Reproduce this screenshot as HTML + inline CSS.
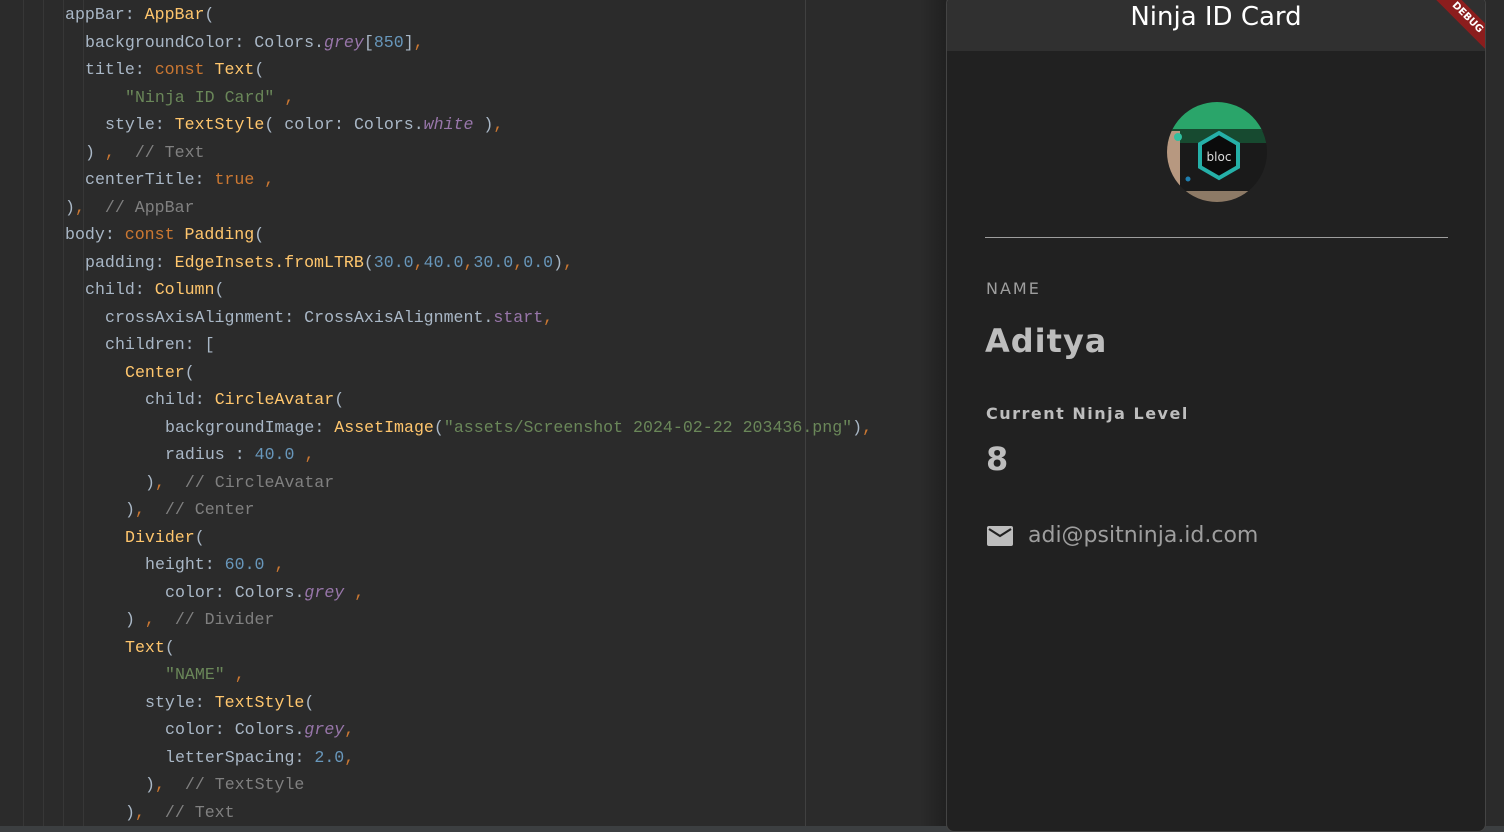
<!DOCTYPE html>
<html><head><meta charset="utf-8"><style>
html,body{margin:0;padding:0;width:1504px;height:832px;overflow:hidden;background:#2b2b2b;position:relative}
.code{position:absolute;left:0;top:1px;font-family:"Liberation Mono",monospace;font-size:16.6px;color:#a9b7c6;white-space:pre}
.l{position:absolute;height:27.5px;line-height:27.5px}
.k{color:#cc7832}.y{color:#ffc66d}.s{color:#6a8759}.n{color:#6897bb}.p{color:#9876aa;font-style:italic}.c{color:#808080}
.g{position:absolute;top:0;width:1px;height:826px;background:#373737}
.app{position:absolute;left:946px;top:-4px;width:538px;height:834px;background:#212121;border:1px solid #444;border-radius:8px;overflow:hidden;font-family:"DejaVu Sans","Liberation Sans",sans-serif}
.bar{position:absolute;left:0;top:0;width:100%;height:54px;background:#303030}
</style></head><body>
<div class="g" style="left:23px"></div><div class="g" style="left:43px"></div><div class="g" style="left:63px"></div><div class="g" style="left:83px"></div>
<div style="position:absolute;left:805px;top:0;width:1px;height:826px;background:#404040"></div>
<div style="position:absolute;left:920px;top:0;width:26px;height:826px;background:linear-gradient(90deg,rgba(0,0,0,0),rgba(0,0,0,.25))"></div>
<div style="position:absolute;left:0;top:826px;width:1504px;height:6px;background:#3c3f41"></div>
<div class="code">
<div class="l" style="top:0;left:65px">appBar: <span class="y">AppBar</span>(</div>
<div class="l" style="top:27.5px;left:85px">backgroundColor: Colors.<span class="p">grey</span>[<span class="n">850</span>]<span class="k">,</span></div>
<div class="l" style="top:55px;left:85px">title: <span class="k">const</span> <span class="y">Text</span>(</div>
<div class="l" style="top:82.5px;left:125px"><span class="s">"Ninja ID Card"</span> <span class="k">,</span></div>
<div class="l" style="top:110px;left:105px">style: <span class="y">TextStyle</span>( color: Colors.<span class="p">white</span> )<span class="k">,</span></div>
<div class="l" style="top:137.5px;left:85px">) <span class="k">,</span>  <span class="c">// Text</span></div>
<div class="l" style="top:165px;left:85px">centerTitle: <span class="k">true ,</span></div>
<div class="l" style="top:192.5px;left:65px">)<span class="k">,</span>  <span class="c">// AppBar</span></div>
<div class="l" style="top:220px;left:65px">body: <span class="k">const</span> <span class="y">Padding</span>(</div>
<div class="l" style="top:247.5px;left:85px">padding: <span class="y">EdgeInsets.fromLTRB</span>(<span class="n">30.0</span><span class="k">,</span><span class="n">40.0</span><span class="k">,</span><span class="n">30.0</span><span class="k">,</span><span class="n">0.0</span>)<span class="k">,</span></div>
<div class="l" style="top:275px;left:85px">child: <span class="y">Column</span>(</div>
<div class="l" style="top:302.5px;left:105px">crossAxisAlignment: CrossAxisAlignment.<span class="p" style="font-style:normal">start</span><span class="k">,</span></div>
<div class="l" style="top:330px;left:105px">children: [</div>
<div class="l" style="top:357.5px;left:125px"><span class="y">Center</span>(</div>
<div class="l" style="top:385px;left:145px">child: <span class="y">CircleAvatar</span>(</div>
<div class="l" style="top:412.5px;left:165px">backgroundImage: <span class="y">AssetImage</span>(<span class="s">"assets/Screenshot 2024-02-22 203436.png"</span>)<span class="k">,</span></div>
<div class="l" style="top:440px;left:165px">radius : <span class="n">40.0</span> <span class="k">,</span></div>
<div class="l" style="top:467.5px;left:145px">)<span class="k">,</span>  <span class="c">// CircleAvatar</span></div>
<div class="l" style="top:495px;left:125px">)<span class="k">,</span>  <span class="c">// Center</span></div>
<div class="l" style="top:522.5px;left:125px"><span class="y">Divider</span>(</div>
<div class="l" style="top:550px;left:145px">height: <span class="n">60.0</span> <span class="k">,</span></div>
<div class="l" style="top:577.5px;left:165px">color: Colors.<span class="p">grey</span> <span class="k">,</span></div>
<div class="l" style="top:605px;left:125px">) <span class="k">,</span>  <span class="c">// Divider</span></div>
<div class="l" style="top:632.5px;left:125px"><span class="y">Text</span>(</div>
<div class="l" style="top:660px;left:165px"><span class="s">"NAME"</span> <span class="k">,</span></div>
<div class="l" style="top:687.5px;left:145px">style: <span class="y">TextStyle</span>(</div>
<div class="l" style="top:715px;left:165px">color: Colors.<span class="p">grey</span><span class="k">,</span></div>
<div class="l" style="top:742.5px;left:165px">letterSpacing: <span class="n">2.0</span><span class="k">,</span></div>
<div class="l" style="top:770px;left:145px">)<span class="k">,</span>  <span class="c">// TextStyle</span></div>
<div class="l" style="top:797.5px;left:125px">)<span class="k">,</span>  <span class="c">// Text</span></div>
</div>

<div class="app">
<div class="bar"></div>
<div style="position:absolute;left:0;top:3px;width:538px;text-align:center;color:#fff;font-size:26px;line-height:34px">Ninja ID Card</div>
<div style="position:absolute;left:470px;top:12px;width:100px;height:18px;background:#8b1d1d;transform:rotate(45deg);color:#fff;font-size:10px;font-weight:bold;text-align:center;line-height:18px">DEBUG</div>
<svg style="position:absolute;left:219px;top:104px" width="102" height="102" viewBox="0 0 102 102">
<defs><clipPath id="cc"><circle cx="51" cy="51" r="50"/></clipPath></defs>
<g clip-path="url(#cc)">
<rect width="102" height="102" fill="#1a1a1a"/>
<rect x="0" y="0" width="102" height="30" fill="#2aa56a"/>
<rect x="0" y="28" width="102" height="14" fill="#174a30"/>
<rect x="0" y="30" width="14" height="70" fill="#b79880"/>
<rect x="15" y="90" width="80" height="12" fill="#8d7a66"/>
<circle cx="12" cy="36" r="4" fill="#2fbf9f"/><circle cx="22" cy="78" r="2.5" fill="#1f7fb0"/>
<polygon points="53,32 72,43 72,66 53,77 34,66 34,43" fill="#0b0b0b" stroke="#25b0a8" stroke-width="4"/>
<text x="53" y="60" text-anchor="middle" font-family="DejaVu Sans,sans-serif" font-size="12" fill="#ddd">bloc</text>
</g></svg>
<div style="position:absolute;left:38px;top:240px;width:463px;height:1px;background:#9e9e9e"></div>
<div style="position:absolute;left:39px;top:282px;color:#9e9e9e;font-size:16px;letter-spacing:2px">NAME</div>
<div style="position:absolute;left:38px;top:325px;color:#bdbdbd;font-size:32px;font-weight:bold;letter-spacing:1px">Aditya</div>
<div style="position:absolute;left:39px;top:407px;color:#bdbdbd;font-size:16px;font-weight:bold;letter-spacing:1.5px">Current Ninja Level</div>
<div style="position:absolute;left:39px;top:443px;color:#bdbdbd;font-size:32px;font-weight:bold">8</div>
<svg style="position:absolute;left:40px;top:529px" width="26" height="20" viewBox="0 0 26 20"><rect x="0" y="0" width="26" height="20" rx="2" fill="#bdbdbd"/><path d="M2 3 L13 10 L24 3" fill="none" stroke="#212121" stroke-width="2.2"/></svg>
<div style="position:absolute;left:81px;top:526px;color:#9e9e9e;font-size:22px">adi@psitninja.id.com</div>
</div>
</body></html>
